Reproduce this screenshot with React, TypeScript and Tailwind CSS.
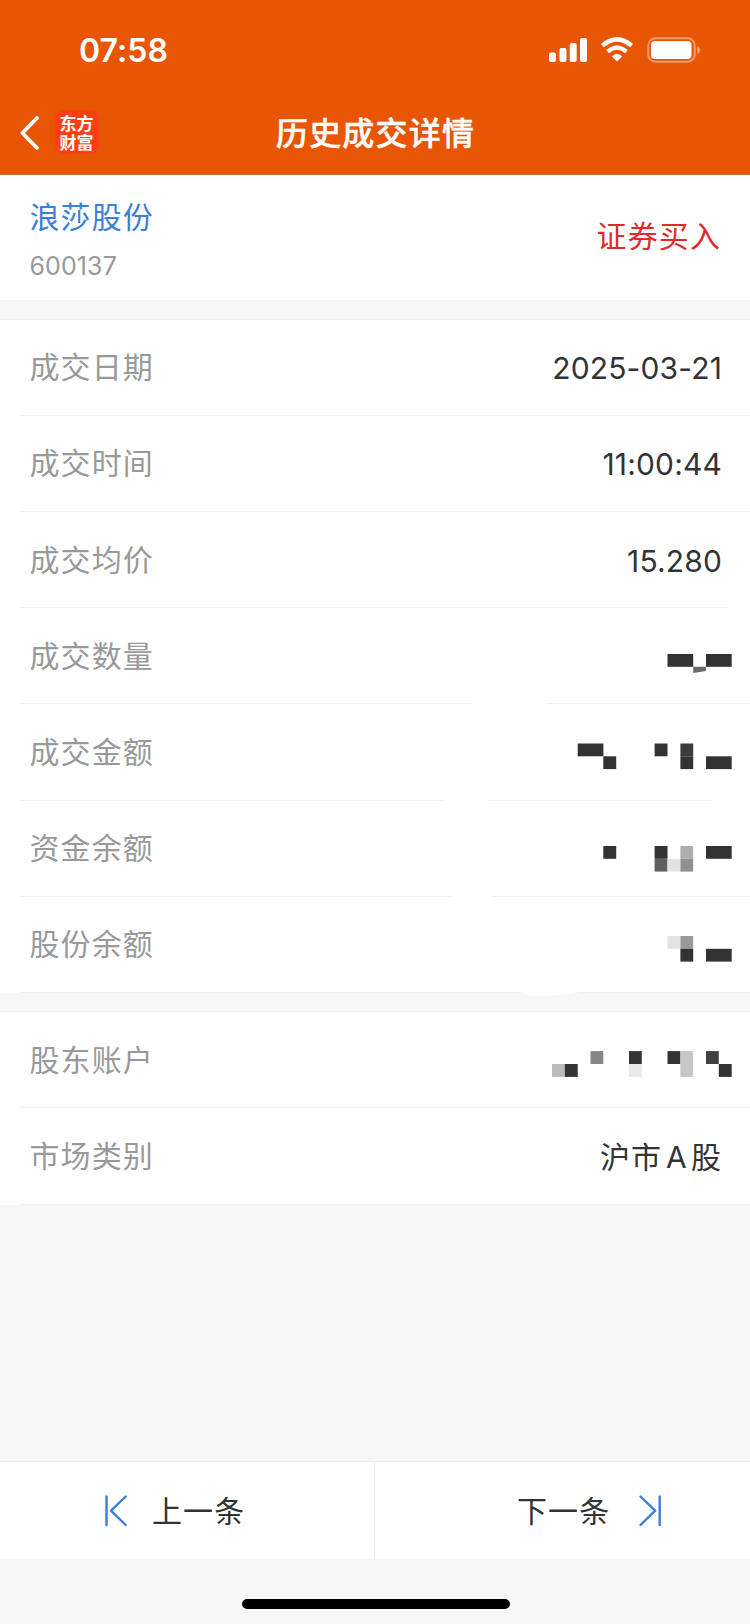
import React from 'react';

// x, y, width, height, fill
type Block = [number, number, number, number, string];

interface RowData {
  label: string;
  value?: string;
  blocks?: Block[];
  // x ranges of the hairline under the row
  lines?: [number, number][];
}

const DARK = '#333333';

const tradeRows: RowData[] = [
  { label: '成交日期', value: '2025-03-21' },
  { label: '成交时间', value: '11:00:44' },
  { label: '成交均价', value: '15.280', lines: [[20, 727]] },
  {
    label: '成交数量',
    blocks: [
      [115.5, 46, 25.7, 12.8, DARK],
      [154, 46, 25.7, 12.8, DARK],
    ],
    lines: [[20, 472], [546, 750]],
  },
  {
    label: '成交金额',
    blocks: [
      [25.7, 39.5, 25.7, 12.8, DARK],
      [51.3, 52.3, 12.9, 12.8, DARK],
      [102.6, 39.5, 12.9, 12.8, DARK],
      [128.4, 39.5, 12.8, 12.8, '#3b3b3b'],
      [128.4, 52.3, 12.8, 12.8, DARK],
      [154, 52.3, 25.7, 12.8, DARK],
    ],
    lines: [[20, 444], [488, 711]],
  },
  {
    label: '资金余额',
    blocks: [
      [51.3, 45, 12.9, 12.8, DARK],
      [102.6, 45, 12.9, 12.8, DARK],
      [102.6, 57.8, 12.9, 12.8, '#606060'],
      [115.5, 57.8, 12.9, 12.8, '#e3e3e3'],
      [128.4, 45, 12.8, 12.8, '#aeaeae'],
      [128.4, 57.8, 12.8, 12.8, '#909090'],
      [154, 45, 25.7, 12.8, DARK],
    ],
    lines: [[20, 452], [492, 750]],
  },
  {
    label: '股份余额',
    blocks: [
      [115.5, 39, 12.9, 12.8, '#e3e3e3'],
      [128.4, 39, 12.8, 12.8, '#9a9a9a'],
      [128.4, 51.8, 12.8, 12.8, DARK],
      [154, 51.8, 25.7, 12.8, DARK],
    ],
    lines: [[20, 523], [577, 750]],
  },
];

const accountRows: RowData[] = [
  {
    label: '股东账户',
    blocks: [
      [0, 52, 12.8, 12.9, '#bbbbbb'],
      [12.8, 52, 12.9, 12.9, DARK],
      [38.5, 39.1, 12.8, 12.9, '#868686'],
      [77, 39.1, 12.8, 12.9, DARK],
      [77, 52, 12.8, 12.9, '#e9e9e9'],
      [115.5, 39.1, 12.9, 12.9, DARK],
      [128.4, 39.1, 12.8, 25.8, '#c6c6c6'],
      [154, 39.1, 12.8, 12.9, '#404040'],
      [166.8, 52, 12.9, 12.9, DARK],
    ],
  },
  { label: '市场类别', value: '沪市A股' },
];

const StatusBar: React.FC = () => (
  <div className="flex h-[94px] items-start justify-between pl-[79px] pr-[50px] pt-[31px]">
    <span className="text-[32px] font-semibold leading-[40px] tracking-[0.1px]">07:58</span>
    <svg className="mt-[5px]" width="152" height="28" viewBox="548 36 152 28" fill="none">
      <g fill="#fff">
        <rect x="549" y="52.5" width="7" height="9.5" rx="2" />
        <rect x="559.5" y="48" width="7" height="14" rx="2" />
        <rect x="569.7" y="43" width="7" height="19" rx="2" />
        <rect x="580" y="38" width="7" height="24" rx="2" />
        <path d="M617 61.5 L611.8 56.4 Q617 51.6 622.2 56.4 Z" />
      </g>
      <path d="M602.4 45.6 Q617 33.2 631.6 45.6" stroke="#fff" strokeWidth="4.4" />
      <path d="M607.6 51.7 Q617 43.6 626.4 51.7" stroke="#fff" strokeWidth="4.2" />
      <rect x="648.3" y="38.3" width="46.4" height="23.4" rx="7" stroke="#fff" strokeOpacity="0.42" strokeWidth="2" />
      <rect x="651" y="41" width="40.5" height="18" rx="4" fill="#fff" />
      <path d="M697.3 46 Q700 47 700 50 Q700 53 697.3 54 Z" fill="#fff" fillOpacity="0.5" />
    </svg>
  </div>
);

const TitleBar: React.FC = () => (
  <div className="grid h-[80px] grid-cols-[1fr_auto_1fr] items-center">
    <div className="flex items-center pb-[2px] pl-[19px]">
      <svg width="21" height="36" viewBox="0 0 21 36" fill="none" stroke="#fff" strokeWidth="3.8" strokeLinecap="round" strokeLinejoin="round">
        <path d="M18 3 L3.4 18 L18 33" />
      </svg>
      <div className="-mt-[2px] ml-[15px] flex h-[44px] w-[44px] justify-center rounded-[8px] bg-[#fd4011] pt-[3px]">
        <span className="w-[35px] break-all font-['Noto_Sans_CJK_SC',sans-serif] text-[17px] font-bold leading-[19px]">
          东方财富
        </span>
      </div>
    </div>
    <h1 className="pb-px pl-px text-[32px] font-medium leading-[40px] tracking-[1.2px] [-webkit-text-stroke:0.4px_#fff]">历史成交详情</h1>
  </div>
);

const Divider: React.FC<{ lines: [number, number][] }> = ({ lines }) => (
  <div className="flex h-px w-full shrink-0">
    {lines.map(([from, to], i) => (
      <div
        key={from}
        className="h-px bg-[#f0f1f1]"
        style={{ marginLeft: from - (i ? lines[i - 1][1] : 0), width: to - from }}
      />
    ))}
  </div>
);

const Mosaic: React.FC<{ blocks: Block[]; tail?: boolean }> = ({ blocks, tail }) => (
  <svg className="-mr-[11px]" width="180" height="95" viewBox="0 0 180 95">
    {blocks.map(([x, y, w, h, fill]) => (
      <rect key={`${x}-${y}`} x={x} y={y} width={w} height={h} fill={fill} />
    ))}
    {tail && <path d="M141.2 58.8 H154 V63 L141.2 65 Z" fill="#6b6b6b" />}
  </svg>
);

const Row: React.FC<{ row: RowData }> = ({ row }) => (
  <div className="flex h-[96.2px] flex-col">
    <div className="flex flex-1 items-center justify-between pl-[29.5px] pr-[29px]">
      <span className="text-[30px] leading-[40px] tracking-[1.1px] text-[#999]">{row.label}</span>
      {row.blocks ? (
        <Mosaic blocks={row.blocks} tail={row.label === '成交数量'} />
      ) : row.value === '沪市A股' ? (
        <span className="flex pt-px text-[30px] leading-[40px] tracking-[1.1px] text-[#333]">
          沪市<span className="ml-[4px] mr-[3px]">A</span>
          <span className="-mr-px">股</span>
        </span>
      ) : (
        <span className="-mr-px pt-[2px] text-[30px] leading-[40px] tracking-[0.15px] text-[#333]">{row.value}</span>
      )}
    </div>
    <Divider lines={row.lines ?? [[20, 750]]} />
  </div>
);

const App: React.FC = () => {
  return (
    <div className="flex h-[1624px] w-[750px] flex-col overflow-hidden bg-[#f7f7f7] font-['Inter','Noto_Sans_CJK_SC',sans-serif]">
      <header className="h-[175px] border-b border-[#c9703f] bg-[#e85605] text-white">
        <StatusBar />
        <TitleBar />
      </header>

      <section className="flex h-[125px] items-center justify-between bg-white pl-[29.5px] pr-[29px]">
        <div className="flex flex-col pt-[3px]">
          <span className="text-[30px] leading-[40px] tracking-[1.1px] text-[#3a80d9]">浪莎股份</span>
          <span className="mt-[13px] text-[25px] leading-[32px] tracking-[0.1px] text-[#999]">600137</span>
        </div>
        <span className="pb-[3px] text-[30px] leading-[40px] tracking-[1.1px] text-[#e02a2a]">证券买入</span>
      </section>

      <section className="mt-[18.6px] border-t border-[#eeefef] bg-white">
        {tradeRows.map((row) => (
          <Row key={row.label} row={row} />
        ))}
      </section>

      {/* the white card bleeds a little into the gap here */}
      <div className="h-[18.4px]">
        <svg className="ml-[520px]" width="60" height="4" viewBox="0 0 60 4">
          <path d="M2 0 Q10 3.4 22 3.2 Q40 2.6 57 0 Z" fill="#fff" />
        </svg>
      </div>

      <section className="border-t border-[#eeefef] bg-white">
        {accountRows.map((row) => (
          <Row key={row.label} row={row} />
        ))}
      </section>

      <footer className="mt-auto">
        <nav className="flex h-[98px] border-t border-[#f0f0f0] bg-white text-[30px] leading-[40px] tracking-[1.1px] text-[#333]">
          <button className="flex w-[375px] items-center border-r border-[#eeeeee] pl-[104px]">
            <svg width="24" height="32" viewBox="0 0 24 32" fill="none" stroke="#3a80d9" strokeWidth="2.4" strokeLinecap="round" strokeLinejoin="round">
              <path d="M2.5 1.5 V30 M21.7 1.5 L7 15.7 L21.7 30" />
            </svg>
            <span className="ml-[24px]">上一条</span>
          </button>
          <button className="flex w-[375px] items-center pl-[142px]">
            <span>下一条</span>
            <svg className="ml-[28px]" width="24" height="32" viewBox="0 0 24 32" fill="none" stroke="#3a80d9" strokeWidth="2.4" strokeLinecap="round" strokeLinejoin="round">
              <path d="M21.7 1.5 V30 M2.5 1.5 L17.2 15.7 L2.5 30" />
            </svg>
          </button>
        </nav>
        <div className="flex h-[65px] justify-center pl-px pt-[40px]">
          <div className="h-[10px] w-[268px] rounded-full bg-black" />
        </div>
      </footer>
    </div>
  );
};

export default App;
